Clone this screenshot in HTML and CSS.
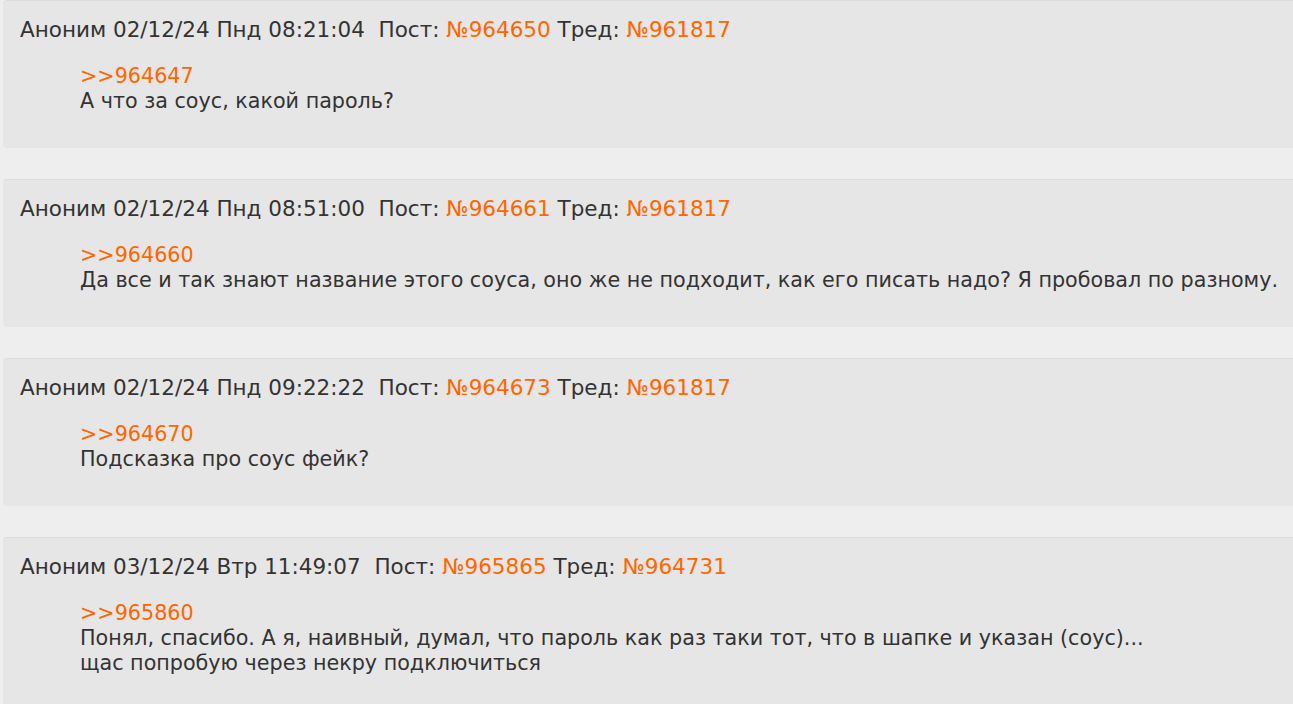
FILE: index.html
```html
<!DOCTYPE html>
<html lang="ru">
<head>
<meta charset="utf-8">
<link rel="stylesheet" href="styles.css">
</head>
<body>
<div class="thread">
  <div class="post">
    <div class="post-head">Аноним 02/12/24 Пнд 08:21:04&nbsp; Пост: <a class="lnk">№964650</a> Тред: <a class="lnk">№961817</a></div>
    <blockquote class="post-body"><a class="lnk">&gt;&gt;964647</a><br>А что за соус, какой пароль?</blockquote>
  </div>
  <div class="post">
    <div class="post-head">Аноним 02/12/24 Пнд 08:51:00&nbsp; Пост: <a class="lnk">№964661</a> Тред: <a class="lnk">№961817</a></div>
    <blockquote class="post-body"><a class="lnk">&gt;&gt;964660</a><br>Да все и так знают название этого соуса, оно же не подходит, как его писать надо? Я пробовал по разному.</blockquote>
  </div>
  <div class="post">
    <div class="post-head">Аноним 02/12/24 Пнд 09:22:22&nbsp; Пост: <a class="lnk">№964673</a> Тред: <a class="lnk">№961817</a></div>
    <blockquote class="post-body"><a class="lnk">&gt;&gt;964670</a><br>Подсказка про соус фейк?</blockquote>
  </div>
  <div class="post">
    <div class="post-head">Аноним 03/12/24 Втр 11:49:07&nbsp; Пост: <a class="lnk">№965865</a> Тред: <a class="lnk">№964731</a></div>
    <blockquote class="post-body"><a class="lnk">&gt;&gt;965860</a><br>Понял, спасибо. А я, наивный, думал, что пароль как раз таки тот, что в шапке и указан (соус)...<br>щас попробую через некру подключиться</blockquote>
  </div>
</div>
</body>
</html>
```
FILE: styles.css
```css
html, body {
  margin: 0;
  padding: 0;
  background: #eeeeee;
  overflow: hidden;
}
body {
  font-family: "DejaVu Sans", Verdana, sans-serif;
  font-size: 20.7px;
  line-height: 25px;
  color: #333333;
}
.thread {
  display: flex;
  flex-direction: column;
  gap: 31px;
  padding: 0 0 0 3px;
  width: 1320px;
}
.post {
  background: #e6e6e6;
  border-top: 1px solid #dcdcdc;
  border-radius: 4px;
  min-height: 148px;
  box-sizing: border-box;
  padding: 16px 0 0 17px;
}
.post-head {
  white-space: nowrap;
  font-size: 21.5px;
}
.post-body {
  margin: 22px 0 34px 60px;
  white-space: nowrap;
}
.lnk {
  color: #ff6600;
  text-decoration: none;
}
```
